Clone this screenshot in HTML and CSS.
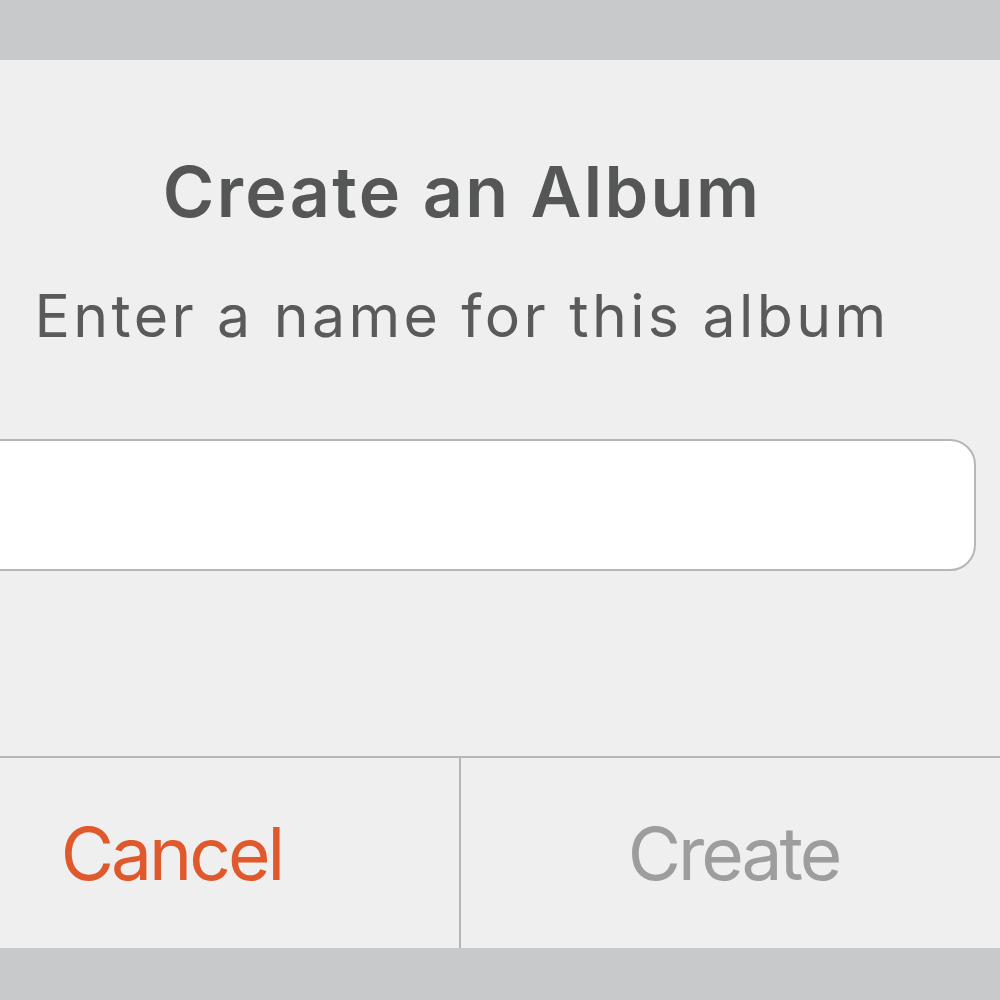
FILE: index.html
```html
<!DOCTYPE html>
<html>
<head>
<meta charset="utf-8">
<link rel="stylesheet" href="styles.css">
</head>
<body>
<div class="stage">
  <div class="dialog">
    <div class="body">
      <h1 class="title">Create an Album</h1>
      <p class="message">Enter a name for this album</p>
      <div class="field"></div>
    </div>
    <div class="actions">
      <button class="btn cancel">Cancel</button>
      <button class="btn create">Create</button>
    </div>
  </div>
</div>
</body>
</html>
```

FILE: styles.css
```css
html, body {
  margin: 0;
  padding: 0;
}
body {
  width: 1000px;
  height: 1000px;
  overflow: hidden;
  background: #c8c9cb;
  font-family: Inter, "Noto Sans", sans-serif;
}
.stage {
  padding-top: 60px;
}
.dialog {
  margin-left: -80px;
  width: 1086px;
  height: 888px;
  background: #efeff0;
  border-radius: 8px;
  display: flex;
  flex-direction: column;
}
.body {
  flex: 1;
  padding: 97px 30px 0 28px;
  display: flex;
  flex-direction: column;
  align-items: center;
}
.title {
  margin: 0;
  font-size: 70px;
  line-height: 70px;
  font-weight: 600;
  color: #555656;
  letter-spacing: 2.4px;
}
.message {
  margin: 59px 0 0 0;
  font-size: 59px;
  line-height: 59px;
  font-weight: 400;
  color: #5a5a5b;
  letter-spacing: 3.4px;
}
.field {
  margin-top: 94px;
  align-self: stretch;
  height: 132px;
  box-sizing: border-box;
  background: #ffffff;
  border: 2px solid #b6b6b7;
  border-radius: 26px;
}
.actions {
  height: 190px;
  border-top: 2px solid #b6b6b7;
  display: grid;
  grid-template-columns: 541px 545px;
}
.btn {
  box-sizing: border-box;
  border: none;
  background: transparent;
  font-family: Inter, "Noto Sans", sans-serif;
  font-size: 73px;
  font-weight: 400;
  letter-spacing: -3px;
  padding: 0;
  margin: 0;
}
.cancel {
  color: #e0592c;
  border-right: 2px solid #b6b6b7;
  padding-right: 36px;
}
.create {
  color: #9d9d9e;
}
```
